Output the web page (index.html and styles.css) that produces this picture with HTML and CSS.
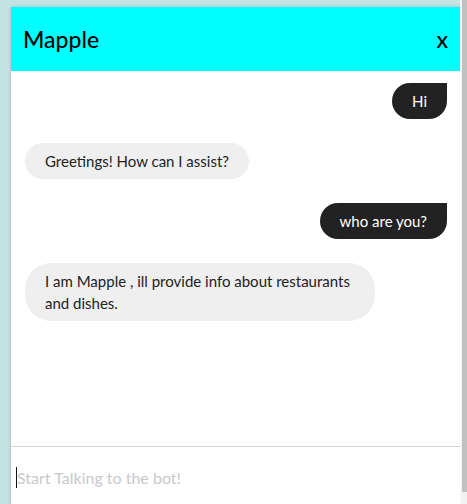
FILE: index.html
```html
<!DOCTYPE html>
<html>
<head>
<meta charset="utf-8">
<link rel="stylesheet" href="styles.css">
</head>
<body>
<div class="chat">
  <div class="header">
    <span class="title">Mapple</span>
    <span class="close">x</span>
  </div>
  <div class="messages">
    <div class="msg user">Hi</div>
    <div class="msg bot">Greetings! How can I assist?</div>
    <div class="msg user">who are you?</div>
    <div class="msg bot">I am Mapple , ill provide info about restaurants and dishes.</div>
  </div>
  <div class="input-row">
    <span class="caret"></span>
    <input class="input" type="text" placeholder="Start Talking to the bot!">
  </div>
</div>
<div class="scrollbar"><div class="thumb"></div></div>
</body>
</html>
```

FILE: styles.css
```css
html, body {
  margin: 0;
  padding: 0;
  overflow: hidden;
}
body {
  background: #c4e4e3;
  font-family: Lato, "Noto Sans", sans-serif;
  height: 504px;
}
.chat {
  margin: 7px 0 0 11px;
  width: 450px;
  height: 520px;
  background: #fff;
  box-shadow: 0 0 4px rgba(0,0,0,0.18);
  display: flex;
  flex-direction: column;
}
.header {
  height: 64px;
  flex: none;
  background: #00ffff;
  display: flex;
  align-items: center;
  justify-content: space-between;
  padding: 0 13px 0 12px;
  color: #000;
}
.title {
  font-size: 23px;
  font-weight: 500;
}
.close {
  font-size: 23px;
  font-weight: 500;
}
.messages {
  height: 375px;
  flex: none;
  box-sizing: border-box;
  padding: 12px 14px;
  display: flex;
  flex-direction: column;
  gap: 24px;
}
.msg {
  font-size: 15px;
  line-height: 22px;
  padding: 7px 20px;
  max-width: 350px;
  box-sizing: border-box;
}
.user {
  align-self: flex-end;
  background: #222;
  color: #fff;
  border-radius: 18px 0 18px 18px;
}
.bot {
  align-self: flex-start;
  background: #efefef;
  color: #222;
  border-radius: 18px;
}
.bot:last-child {
  border-radius: 26px;
}
.input-row {
  border-top: 1px solid #d3d3d3;
  flex: 1;
  display: flex;
  align-items: flex-start;
  padding: 20px 0 0 5px;
}
.caret {
  flex: none;
  width: 1px;
  height: 21px;
  background: #111;
}
.input {
  flex: 1;
  min-width: 0;
  border: none;
  outline: none;
  margin: 0;
  padding: 0;
  height: 21px;
  font-family: Lato, "Noto Sans", sans-serif;
  font-size: 16px;
  color: #222;
  background: transparent;
}
.input::placeholder {
  color: #c9c9c9;
}
.scrollbar {
  position: fixed;
  top: 0;
  right: 0;
  width: 6px;
  height: 504px;
  background: #f1f1f1;
  border-left: 1px solid #fafafa;
}
.thumb {
  margin-left: 1px;
  width: 5px;
  height: 492px;
  background: #c1c1c1;
}
```
